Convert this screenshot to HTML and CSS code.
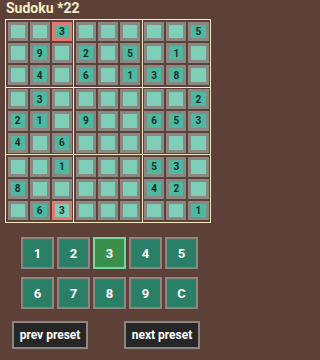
FILE: index.html
```html
<!DOCTYPE html>
<html>
<head>
<meta charset="utf-8">
<link rel="stylesheet" href="styles.css">
</head>
<body>
<div class="title">Sudoku *22</div>
<div class="board">
  <div class="block">
    <div class="cell"></div><div class="cell"></div><div class="cell given bad">3</div>
    <div class="cell"></div><div class="cell given">9</div><div class="cell"></div>
    <div class="cell"></div><div class="cell given">4</div><div class="cell"></div>
  </div>
  <div class="block">
    <div class="cell"></div><div class="cell"></div><div class="cell"></div>
    <div class="cell given">2</div><div class="cell"></div><div class="cell given">5</div>
    <div class="cell given">6</div><div class="cell"></div><div class="cell given">1</div>
  </div>
  <div class="block">
    <div class="cell"></div><div class="cell"></div><div class="cell given">5</div>
    <div class="cell"></div><div class="cell given">1</div><div class="cell"></div>
    <div class="cell given">3</div><div class="cell given">8</div><div class="cell"></div>
  </div>
  <div class="block">
    <div class="cell"></div><div class="cell given">3</div><div class="cell"></div>
    <div class="cell given">2</div><div class="cell given">1</div><div class="cell"></div>
    <div class="cell given">4</div><div class="cell"></div><div class="cell given">6</div>
  </div>
  <div class="block">
    <div class="cell"></div><div class="cell"></div><div class="cell"></div>
    <div class="cell given">9</div><div class="cell"></div><div class="cell"></div>
    <div class="cell"></div><div class="cell"></div><div class="cell"></div>
  </div>
  <div class="block">
    <div class="cell"></div><div class="cell"></div><div class="cell given">2</div>
    <div class="cell given">6</div><div class="cell given">5</div><div class="cell given">3</div>
    <div class="cell"></div><div class="cell"></div><div class="cell"></div>
  </div>
  <div class="block">
    <div class="cell"></div><div class="cell"></div><div class="cell given">1</div>
    <div class="cell given">8</div><div class="cell"></div><div class="cell"></div>
    <div class="cell"></div><div class="cell given">6</div><div class="cell bad">3</div>
  </div>
  <div class="block">
    <div class="cell"></div><div class="cell"></div><div class="cell"></div>
    <div class="cell"></div><div class="cell"></div><div class="cell"></div>
    <div class="cell"></div><div class="cell"></div><div class="cell"></div>
  </div>
  <div class="block">
    <div class="cell given">5</div><div class="cell given">3</div><div class="cell"></div>
    <div class="cell given">4</div><div class="cell given">2</div><div class="cell"></div>
    <div class="cell"></div><div class="cell"></div><div class="cell given">1</div>
  </div>
</div>
<div class="keypad">
  <div class="keyrow">
    <div class="key">1</div><div class="key">2</div><div class="key active">3</div><div class="key">4</div><div class="key">5</div>
  </div>
  <div class="keyrow">
    <div class="key">6</div><div class="key">7</div><div class="key">8</div><div class="key">9</div><div class="key">C</div>
  </div>
</div>
<div class="presets">
  <div class="preset">prev preset</div>
  <div class="preset">next preset</div>
</div>
</body>
</html>
```
FILE: styles.css
```css
html, body {
  margin: 0;
  padding: 0;
}
body {
  width: 216px;
  height: 360px;
  background: #5d4037;
  font-family: Roboto, "Liberation Sans", sans-serif;
  overflow: hidden;
}
.title {
  color: #f4eecb;
  font-weight: bold;
  font-size: 14px;
  line-height: 16px;
  padding-left: 6px;
  height: 19px;
}
.board {
  margin-left: 5px;
  width: 206px;
  height: 204px;
  box-sizing: border-box;
  border: 1px solid #f3ebbf;
  background: #f3ebbf;
  display: grid;
  grid-template-columns: 1fr 1fr 1fr;
  grid-template-rows: 1fr 1fr 1fr;
  gap: 1px;
}
.block {
  background: #5d4037;
  display: grid;
  grid-template-columns: 1fr 1fr 1fr;
  grid-template-rows: 1fr 1fr 1fr;
  gap: 2px;
  padding: 1.5px;
}
.cell {
  box-sizing: border-box;
  border: 3px solid #8b8883;
  background: #7fcfb8;
  color: #16302b;
  font-weight: bold;
  font-size: 10px;
  display: flex;
  align-items: center;
  justify-content: center;
}
.cell.given {
  background: #4fb8a0;
}
.cell.bad {
  border-color: #e57a72;
}
.keypad {
  margin-top: 14px;
  margin-left: 21px;
  display: flex;
  flex-direction: column;
  gap: 8px;
}
.keyrow {
  display: flex;
  gap: 3px;
}
.key {
  box-sizing: border-box;
  width: 33px;
  height: 32px;
  border: 2px solid #8b8883;
  background: #2a8066;
  color: #ffffff;
  font-weight: bold;
  font-size: 13px;
  display: flex;
  align-items: center;
  justify-content: center;
}
.key.active {
  background: #3a8f4c;
  border-color: #74d6a2;
}
.presets {
  margin-top: 12px;
  display: flex;
  justify-content: space-between;
  padding: 0 16px 0 12px;
}
.preset {
  box-sizing: border-box;
  width: 76px;
  height: 28px;
  border: 2px solid #8b8883;
  background: #262626;
  color: #ffffff;
  font-weight: bold;
  font-size: 12px;
  display: flex;
  align-items: center;
  justify-content: center;
}
```
